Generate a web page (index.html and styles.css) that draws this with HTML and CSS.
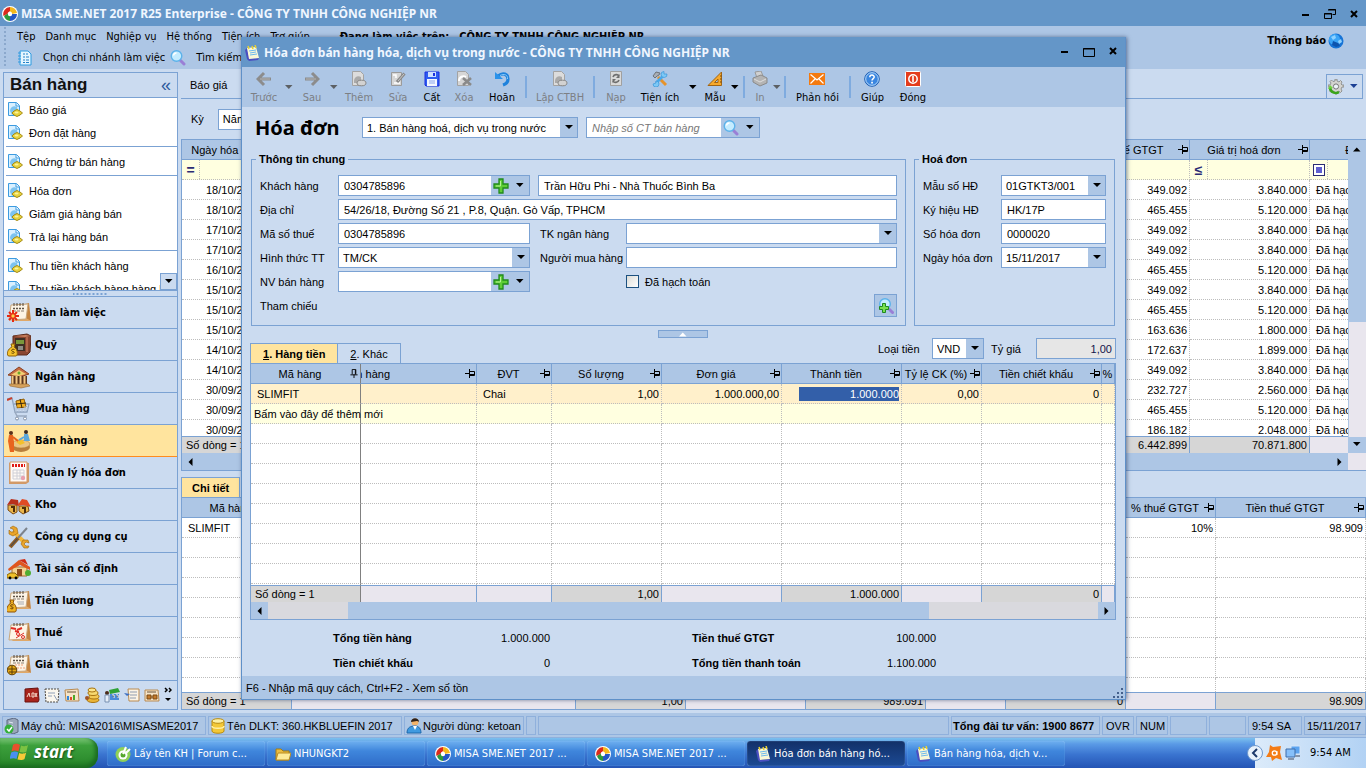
FILE: index.html
```html
<!DOCTYPE html>
<html lang="vi">
<head>
  <meta charset="UTF-8">
  <meta name="viewport" content="width=device-width, initial-scale=1.0">
  <title>MISA SME.NET 2017</title>
  <link rel="stylesheet" href="styles.css">
</head>
<body>

<!-- Icon sprite -->
<svg class="sprite" xmlns="http://www.w3.org/2000/svg">
  <symbol id="i-logo" viewBox="0 0 16 16">
    <circle cx="8" cy="8" r="8" fill="#fff"/>
    <path d="M8 1a7 7 0 0 1 7 6l-5 1-2-3z" fill="#f4b81c"/>
    <path d="M15 8a7 7 0 0 1-7 7l-1-5 3-2z" fill="#2457c5"/>
    <path d="M8 15a7 7 0 0 1-6-5l4-3 2 3z" fill="#2c9a3c"/>
    <path d="M1.500 10A7 7 0 0 1 8 1v4L5 8z" fill="#dc2a1c"/>
    <circle cx="8" cy="8" r="2.200" fill="#fff"/>
  </symbol>
  <symbol id="i-note" viewBox="0 0 16 16">
    <path d="M1 5l2-2 3 12-3-1z" fill="#4a4fc0"/>
    <path d="M3 14l12-1-1 2-9 1z" fill="#4a4fc0"/>
    <path d="M3 3l9-1 3 11-10 1z" fill="#fbf8d8"/>
    <path d="M5 6l7-1M6 8l6-1M6 10l7-1" stroke="#6cb8ee"/>
    <path d="M4 1l1 3M8 1l1 3M11 0l1 3" stroke="#e8cf32" stroke-width="1.500"/>
  </symbol>
  <symbol id="i-list" viewBox="0 0 16 16">
    <path d="M3 1h8l3 3v11H3z" fill="#e6f6ff" stroke="#2f9be0"/>
    <path d="M1 3h3M1 6h3M1 9h3M1 12h3" stroke="#2f9be0"/>
    <path d="M6 4h2M6 7h2M6 10h2M6 12.500h2M9 4h2M9 7h3M9 10h3M9 12.500h3" stroke="#2382c8" stroke-width="1.200"/>
  </symbol>
  <symbol id="i-search" viewBox="0 0 16 16">
    <path d="M10.500 10.500l3.500 3.500" stroke="#9a7fd6" stroke-width="3" stroke-linecap="round"/>
    <circle cx="6.500" cy="6" r="5.300" fill="#c4ecff" stroke="#5cb2ea" stroke-width="1.400"/>
    <path d="M3.500 5.500a3 3 0 0 1 3-2.500" stroke="#fff" stroke-width="1.500" fill="none"/>
  </symbol>
  <symbol id="i-search-add" viewBox="0 0 16 16">
    <path d="M11.500 11.500l3 3" stroke="#9a7fd6" stroke-width="3" stroke-linecap="round"/>
    <circle cx="7" cy="6" r="5.300" fill="#c4ecff" stroke="#5cb2ea" stroke-width="1.400"/>
    <path d="M4.500 5.500h3v3h3v3h-3v3h-3v-3h-3v-3h3z" fill="#7ae04e" stroke="#1f8a1f"/>
  </symbol>
  <symbol id="i-globe" viewBox="0 0 16 16">
    <circle cx="8" cy="8" r="7.500" fill="#1673d6"/>
    <circle cx="6.500" cy="6.500" r="5.500" fill="#3aa4f6"/>
    <path d="M3 4l4-2 1 3-3 2zM10 8l3-2 1 3-3 2z" fill="#8fd2ff"/>
    <path d="M5 8l5 2 2 3-4 1-4-2z" fill="#0d54ae"/>
  </symbol>
  <symbol id="i-gear" viewBox="0 0 16 16">
    <path d="M7 0h2v2l2 1 1.500-1.500L14 3l-1 2 1 1h2v2h-2l-1 2 1 2-1.500 1.500L11 12l-2 1v2H7v-2l-2-1-2 1.500L1.500 12 3 10 2 8H0V6h2l1-2-1-1.500L3.500 1 5 2.500 7 2z" fill="#d4d4d0" stroke="#82827e" stroke-width=".8"/>
    <circle cx="8" cy="7.500" r="2.600" fill="#eef3fa" stroke="#777"/>
    <path d="M2 9c1 5 6 6 9 4" stroke="#3aa51a" stroke-width="2.600" fill="none"/>
    <path d="M0 10l2-4 3 3z" fill="#6fd23c"/>
  </symbol>
  <symbol id="i-voucher" viewBox="0 0 16 16">
    <path d="M1.500.500h8l3 3v10h-11z" fill="#d9f0ff" stroke="#3c9be0"/>
    <path d="M9 1v3h3" fill="#fff" stroke="#3c9be0"/>
    <path d="M3 9c0-4 4-6 7-4l1 5-6 3z" fill="#7cc3f0"/>
    <path d="M5 11l2-2 3-1.500 3 1.500 2.500 2-2.500 2-3 1.500L7 13z" fill="#e6d23e" stroke="#a88c14"/>
    <ellipse cx="9.500" cy="10.500" rx="2" ry="1" fill="#fbf39a"/>
  </symbol>
  <symbol id="i-pin" viewBox="0 0 10 9">
    <path d="M0 4.500h4M4.500 0v9M4.500 2.500h5v4h-5M4.500 5.500H9" stroke="#000" fill="none"/>
  </symbol>
  <symbol id="i-pinned" viewBox="0 0 10 10">
    <path d="M5 6v4M1 6.500h8M3 6V.500h4V6M6.500 1v5" stroke="#000" fill="none"/>
  </symbol>
  <symbol id="i-down" viewBox="0 0 8 5"><path d="M0 0h7.500L3.800 4z"/></symbol>
  <symbol id="i-up" viewBox="0 0 8 5"><path d="M0 4.500h7.500L3.800.500z"/></symbol>
  <symbol id="i-left" viewBox="0 0 5 8"><path d="M4.500 0v8L.500 4z"/></symbol>
  <symbol id="i-right" viewBox="0 0 5 8"><path d="M.500 0v8l4-4z"/></symbol>
  <symbol id="i-plus" viewBox="0 0 16 16">
    <path d="M6 1h4v5h5v4h-5v5H6v-5H1V6h5z" fill="#5fce35" stroke="#218a1c" stroke-width="1.300"/>
    <path d="M7.500 3v5H3" stroke="#b6f29a" fill="none"/>
  </symbol>

  <!-- dialog toolbar -->
  <symbol id="i-back" viewBox="0 0 16 16"><path d="M8 2L2 8l6 6M3 8h12" stroke="#8c8c8c" stroke-width="3" fill="none"/><path d="M4 8h10" stroke="#b5b5b5"/></symbol>
  <symbol id="i-next" viewBox="0 0 16 16"><path d="M8 2l6 6-6 6M13 8H1" stroke="#8c8c8c" stroke-width="3" fill="none"/><path d="M2 8h10" stroke="#b5b5b5"/></symbol>
  <symbol id="i-add" viewBox="0 0 16 16">
    <path d="M1.500.500h8l3 3v11h-11z" fill="#dcdcdc" stroke="#a3a3a3"/>
    <path d="M3 10c0-4 4-6 7-4v6H3z" fill="#aaa"/>
    <ellipse cx="10.500" cy="12" rx="4.500" ry="2.800" fill="#d2d2d2" stroke="#888"/>
  </symbol>
  <symbol id="i-edit" viewBox="0 0 16 16">
    <path d="M1.500 1.500h10v13h-10z" fill="#d6d6d6" stroke="#9b9b9b"/>
    <path d="M3 4h3v3M4 12h6" stroke="#fff" stroke-width="1.500" fill="none"/>
    <path d="M14.500 2.500L7 11" stroke="#888" stroke-width="3"/><path d="M14 3L8 10" stroke="#c8c8c8"/>
  </symbol>
  <symbol id="i-save" viewBox="0 0 16 16">
    <path d="M1 1h14v14H2l-1-1z" fill="#2f5cf0" stroke="#1a2ee0"/>
    <path d="M4 1h8v5H4z" fill="#cfe0ff"/><path d="M9 2h2v3H9z" fill="#1a2ee0"/>
    <path d="M3 8h10v7H3z" fill="#f4f7ff"/><path d="M5 10h6M5 12h6" stroke="#8aa6ea"/>
  </symbol>
  <symbol id="i-delete" viewBox="0 0 16 16">
    <path d="M1.500.500h8l3 3v11h-11z" fill="#d6d6d6" stroke="#a3a3a3"/>
    <path d="M3 10c0-4 4-6 7-4" stroke="#fff" stroke-width="2" fill="none"/>
    <path d="M7 7l8 7M15 7l-8 7" stroke="#8a8a8a" stroke-width="2.600"/>
  </symbol>
  <symbol id="i-undo" viewBox="0 0 16 16">
    <path d="M4 5c5-4 10-2 10 3 0 3-2 5-5 6" stroke="#1f82dc" stroke-width="3.200" fill="none"/>
    <path d="M1 1v7h8z" fill="#2a92ea"/><path d="M6 4.500c4-2 8-1 7.500 3.500" stroke="#86c9fa" fill="none"/>
  </symbol>
  <symbol id="i-reload" viewBox="0 0 16 16">
    <path d="M2.500.500h11v14h-11z" fill="#d9d9d9" stroke="#a0a0a0"/>
    <path d="M5 6c1-3 5-3 6-1M11 9c-1 3-5 3-6 1" stroke="#6e6e6e" stroke-width="1.600" fill="none"/>
    <path d="M11.500 3v4H8zM4.500 12V8H8z" fill="#6e6e6e"/>
  </symbol>
  <symbol id="i-tools" viewBox="0 0 16 16">
    <path d="M6 6l8 8" stroke="#e6932a" stroke-width="3"/>
    <path d="M1 5l3-4 4 1-1 2-2 1-2 2z" fill="#a9aeb5" stroke="#6d7278"/>
    <path d="M12 4L4 12" stroke="#4aa9ea" stroke-width="2.600"/>
    <path d="M15 3a3 3 0 1 1-3-2.500V3h2zM1 13a3 3 0 1 0 3-3v2z" fill="#7cc8f6" stroke="#3c96d8" stroke-width=".7"/>
  </symbol>
  <symbol id="i-ruler" viewBox="0 0 16 16">
    <path d="M14.500 1v13.500H1z" fill="#f6a92c" stroke="#a06414"/>
    <path d="M11 8v3.500H7.500z" fill="#adc6e5" stroke="#a06414"/>
    <path d="M13 5h1.500M13 8h1.500M13 11h1.500" stroke="#6a4410"/>
  </symbol>
  <symbol id="i-print" viewBox="0 0 16 16">
    <path d="M3 1l6-1 2 5-6 2z" fill="#d0d0d0" stroke="#999"/>
    <path d="M1 7l8-3 6 3v5l-7 3-7-4z" fill="#b4b4b4" stroke="#8a8a8a"/>
    <path d="M2 8l6 3 6-3" stroke="#ddd" fill="none"/>
  </symbol>
  <symbol id="i-mail" viewBox="0 0 16 16">
    <path d="M0 2h16v12H0z" fill="#f47a10"/>
    <path d="M1.500 3.500L8 9l6.500-5.500M1.500 12.500L6 8M14.500 12.500L10 8" stroke="#fff" stroke-width="1.200" fill="none"/>
  </symbol>
  <symbol id="i-help" viewBox="0 0 16 16">
    <circle cx="8" cy="8" r="7.300" fill="#3a86e0" stroke="#2160b4"/>
    <circle cx="8" cy="8" r="6.300" fill="none" stroke="#b4d9fa"/>
    <path d="M5.800 6.300c0-3 4.400-2.800 4.400-.3 0 1.600-2.200 1.600-2.200 3.500" stroke="#fff" stroke-width="1.500" fill="none"/>
    <path d="M7.200 10.800h1.700v1.700H7.200z" fill="#fff"/>
  </symbol>
  <symbol id="i-power" viewBox="0 0 16 16">
    <rect x=".5" y=".5" width="15" height="15" rx="1" fill="#e43c1c" stroke="#fff"/>
    <circle cx="8" cy="8" r="4.200" fill="none" stroke="#fff" stroke-width="1.500"/>
    <path d="M8 5v6" stroke="#fff" stroke-width="1.600"/>
  </symbol>

  <!-- navigation -->
  <symbol id="i-cal" viewBox="0 0 24 24">
    <path d="M18 3l4-1 2 18-5-2z" fill="#c58440"/>
    <path d="M3 18l16-1 5 3H6z" fill="#e0a868"/>
    <path d="M4 4l17-1-2 15-17 1z" fill="#fdf4e6" stroke="#c9a77c"/>
    <path d="M6 7.500h12" stroke="#5e5246" stroke-width="1.500" stroke-dasharray="2 1"/>
    <path d="M6 10h11" stroke="#8d8072" stroke-dasharray="3 1"/>
    <path d="M7 2v3M10 2v3M13 2v3M16 2v3" stroke="#4e4236"/>
  </symbol>
  <symbol id="i-desk" viewBox="0 0 24 24">
    <use href="#i-cal"/>
    <path d="M6 9v12M0 15h12M2 11l8 8M10 11l-8 8" stroke="#e52a14" stroke-width="2"/>
    <circle cx="6" cy="15" r="2.200" fill="#ffd24a" stroke="#e52a14"/>
  </symbol>
  <symbol id="i-safe" viewBox="0 0 24 24">
    <path d="M6 3l14-2 4 2-1 16-3 3H6z" fill="#8a4630" stroke="#5e2c1c"/>
    <path d="M7 3l12-1 4 1-5 1z" fill="#c9805e"/>
    <path d="M8 5h10v13H8z" fill="#3e2f24"/>
    <path d="M9 7h8v4H9z" fill="#78973c"/><path d="M11 13h5v4h-5z" fill="#8d8d86"/>
    <path d="M20 4v15" stroke="#b0654a" stroke-width="2"/>
    <path d="M4 11h4l-1 3c4 2 4 9 2 9H2c-3 0-2-7 3-9z" fill="#f6c22c" stroke="#8e6308"/>
    <path d="M7.500 16.500c-3-1-4 1.500-1.500 2s1 2.500-1.500 1.500" stroke="#5f4000" fill="none"/>
  </symbol>
  <symbol id="i-bank" viewBox="0 0 24 24">
    <path d="M1 10L12 2l10 7-9 3z" fill="#c56a42" stroke="#8b4222"/>
    <path d="M4 10l8-5 7 4-7 2z" fill="#f2cf74"/><circle cx="12" cy="8" r="1.500" fill="#6ca82a"/>
    <path d="M4 11h16v8H4z" fill="#5a3620"/>
    <path d="M5.500 11v8M9.500 11v8M13.500 11v8M17.500 11v8" stroke="#f3c884" stroke-width="2"/>
    <path d="M2 19h19l2 2-9 2-11-2z" fill="#d5a15c" stroke="#94642e" stroke-width=".6"/>
  </symbol>
  <symbol id="i-cart" viewBox="0 0 24 24">
    <path d="M0 2l5-1 3 14h12l2-8H7" stroke="#8ea2bd" stroke-width="1.300" fill="none"/>
    <path d="M0 3l5-2" stroke="#c8402c" stroke-width="2"/>
    <path d="M9 4l8-2 2 8-9 1z" fill="#f3ae1e" stroke="#8f5d06"/>
    <path d="M13 2l2 9M9 7l10-1" stroke="#3c2a0c"/>
    <path d="M9 9v6M12 11v4M15 11v4M18 9v6M8 12h13" stroke="#b4c3d8"/>
    <path d="M8 15l2 4h10" stroke="#9aaac0" fill="none" stroke-width="1.500"/>
    <circle cx="10" cy="21.500" r="1.500" fill="#fff" stroke="#8191a8"/><circle cx="18" cy="21.500" r="1.500" fill="#fff" stroke="#8191a8"/>
  </symbol>
  <symbol id="i-sale" viewBox="0 0 24 24">
    <ellipse cx="14" cy="18" rx="9" ry="5" fill="#b97f3c"/>
    <ellipse cx="14" cy="15" rx="9" ry="4" fill="#ebc583" stroke="#b17c38" stroke-width=".6"/>
    <path d="M9 13l5-3 4 4-5 2z" fill="#f3c02c"/>
    <circle cx="4" cy="4" r="2" fill="#5b2f1a"/>
    <path d="M2 6l4 0 1 7 0 10H3L1 12z" fill="#e8641e"/><path d="M6 8l5 4" stroke="#e8641e" stroke-width="2"/>
    <circle cx="19" cy="3" r="2" fill="#3b2a22"/>
    <path d="M17 5h4l2 7h-6z" fill="#5ba7dc"/><path d="M17 8l-5 3" stroke="#5ba7dc" stroke-width="2"/>
  </symbol>
  <symbol id="i-invoice" viewBox="0 0 24 24">
    <path d="M2 2h20v19l-3 2H2z" fill="#d29a68"/>
    <path d="M3 1h17v20H3z" fill="#fffaf6" stroke="#d29a68"/>
    <path d="M5 4.500h13" stroke="#e01c14" stroke-width="3" stroke-dasharray="2 1"/>
    <path d="M6 9h11v9H6zM6 12h11M6 15h11M10 9v9M13 9v9" stroke="#cfcfd6" fill="none"/>
    <circle cx="16" cy="17" r="2.200" fill="#e9a0b0"/>
  </symbol>
  <symbol id="i-store" viewBox="0 0 24 24">
    <path d="M1 12h9v7l-4 2-5-4z" fill="#eab54a" stroke="#7c4a12"/><path d="M0 12l4-6 7 1 1 6-6-2z" fill="#b8301c"/>
    <path d="M12 13h9l1 5-6 3-4-3z" fill="#eab54a" stroke="#7c4a12"/><path d="M10 13l5-7 5 1 4 7-8-2z" fill="#e04a26"/>
    <path d="M4 14h3v5M15 15h3v5" stroke="#4e2c08" stroke-width="2" fill="none"/>
  </symbol>
  <symbol id="i-wrench" viewBox="0 0 24 24">
    <path d="M6 6l12 12" stroke="#f3b63a" stroke-width="4"/>
    <path d="M3 3l3 1 1 3-3 0-2-2 0 4 4 2 5-3-1-5-4-2zM22 21l-3 0-2-2 2-2 3 1-1-3-5 0-2 4 3 4 4 0z" fill="#e9a42a" stroke="#9c6510" stroke-width=".6"/>
    <path d="M20 3l-9 10" stroke="#7d838c" stroke-width="2"/><path d="M11 13l-8 9" stroke="#8a5b26" stroke-width="4"/><path d="M10 14l-6 7" stroke="#3c4a5c" stroke-width="1"/>
  </symbol>
  <symbol id="i-house" viewBox="0 0 24 24">
    <path d="M5 10h15v9H5z" fill="#f4d493" stroke="#a86c2c"/>
    <path d="M1 12L12 3l11 7v3l-10-5-11 6z" fill="#e0561e"/><path d="M12 3l6-1 3 6z" fill="#d02c14"/>
    <path d="M10 12h5v7h-5z" fill="#8f4c1c"/>
    <path d="M0 18l3-2h5l3 3v2H0z" fill="#f0c02a" stroke="#8c6408"/><circle cx="3" cy="21" r="1.400"/><circle cx="9" cy="21" r="1.400"/>
    <circle cx="21" cy="16" r="3" fill="#4fae32"/>
  </symbol>
  <symbol id="i-salary" viewBox="0 0 24 24">
    <use href="#i-cal"/>
    <path d="M10 13h7M11 15h6" stroke="#a5aab4"/>
    <path d="M3 11h4l-1 3c4 2 4 9 2 9H1c-3 0-1-7 3-9z" fill="#f0b424" stroke="#8e5208"/>
    <path d="M6.500 16c-3-1-4 1.500-1.500 2s1 2.500-1.500 1.500" stroke="#5f3000" fill="none"/>
  </symbol>
  <symbol id="i-tax" viewBox="0 0 24 24">
    <use href="#i-cal"/>
    <path d="M4 6h14v6H4z" fill="#fdf4e6"/><path d="M4 7l5 1M8 10l4 1M10 9l5-2" stroke="#e02c24" stroke-width="2"/>
    <path d="M9 17l8-5" stroke="#e02c24"/><circle cx="11" cy="13" r="1.500" fill="none" stroke="#e02c24"/><circle cx="16" cy="16" r="1.500" fill="none" stroke="#e02c24"/>
  </symbol>
  <symbol id="i-cost" viewBox="0 0 24 24">
    <use href="#i-cal"/>
    <path d="M8 12h9M10 15h8" stroke="#f0a07c" stroke-dasharray="2 1"/>
    <circle cx="5" cy="17" r="4.800" fill="#e6a814" stroke="#5c3c04"/><path d="M1 16h8M5 13v8M2 19h7" stroke="#5c3c04"/>
  </symbol>
  <symbol id="i-book" viewBox="0 0 16 16"><path d="M1 2l13-1 1 12-1 2H1z" fill="#a8241c" stroke="#6a120e"/><path d="M3 10l2-4 1 4M8 6h2v4H8zM11 6l2 4M13 6l-2 4" stroke="#f4d8c8" fill="none"/></symbol>
  <symbol id="i-check" viewBox="0 0 16 16"><path d="M1 2h14l-1 13H2z" fill="#fbf7ee" stroke="#4e4a44" stroke-dasharray="2 1"/><path d="M4 6h7M4 9h4M10 8l3 5" stroke="#90a0b8"/></symbol>
  <symbol id="i-report" viewBox="0 0 16 16"><path d="M1 3l13-1 1 12H2z" fill="#f5e4c8" stroke="#b98a50"/><path d="M3 5h9" stroke="#6c5438"/><path d="M4 13V9" stroke="#2e86dc" stroke-width="2"/><path d="M7 13v-3" stroke="#e04a28" stroke-width="2"/><path d="M10 13V8" stroke="#4ca828" stroke-width="2"/></symbol>
  <symbol id="i-coins" viewBox="0 0 16 16"><ellipse cx="9" cy="13" rx="6" ry="2.500" fill="#eab436" stroke="#a87410"/><ellipse cx="10" cy="9.500" rx="5" ry="2.500" fill="#f2c854" stroke="#a87410"/><ellipse cx="9" cy="6" rx="5" ry="2.500" fill="#f6d870" stroke="#a87410"/><ellipse cx="8" cy="3" rx="4" ry="2" fill="#fbe58c" stroke="#a87410"/><circle cx="3" cy="11" r="2" fill="#a25426"/></symbol>
  <symbol id="i-shop" viewBox="0 0 16 16"><path d="M5 3l9-2 2 4-10 2z" fill="#2fa236"/><path d="M6 7h9v6H6z" fill="#4a8bd8"/><path d="M8 8h2v3M12 8h2v3" stroke="#fff"/><circle cx="3" cy="6" r="2" fill="#4c2c18"/><path d="M1 8h4v7H1z" fill="#e6eef8" stroke="#7890b0"/></symbol>
  <symbol id="i-form" viewBox="0 0 16 16"><path d="M4 2h11v12H5z" fill="#fbf4e6" stroke="#b98a50"/><path d="M6 5h7M6 8h7M6 11h6" stroke="#8f9cb0"/><path d="M0 6l6 1-3 2z" fill="#3e6fc0"/></symbol>
  <symbol id="i-merge" viewBox="0 0 16 16"><path d="M1 3h13l1 11H1z" fill="#f5e4c8" stroke="#b98a50"/><path d="M3 5h9" stroke="#6c5438"/><path d="M3 8h4v4H3zM9 8h4v4H9zM7 10h2" fill="#c47a2c" stroke="#7c4a12"/></symbol>

  <!-- status bar and task bar -->
  <symbol id="i-server" viewBox="0 0 16 16"><path d="M3 2l7-2 4 2v12l-5 2-6-3z" fill="#9aa6ba" stroke="#5c6880"/><path d="M5 4l4 1M5 7l4 1" stroke="#e4ebf5"/><circle cx="5" cy="11" r="4.500" fill="#34b03a"/><path d="M3 11l2 2 3-4" stroke="#fff" stroke-width="1.500" fill="none"/></symbol>
  <symbol id="i-db" viewBox="0 0 16 16"><path d="M2 3v10c0 3 12 3 12 0V3z" fill="#f3c838" stroke="#b98c10"/><ellipse cx="8" cy="3" rx="6" ry="2.300" fill="#fdf0a4" stroke="#b98c10"/><path d="M2 8c0 3 12 3 12 0" stroke="#fff2a8" fill="none" stroke-width="1.500"/></symbol>
  <symbol id="i-user" viewBox="0 0 16 16"><circle cx="9" cy="4" r="3.500" fill="#f2b36a"/><path d="M5 4c0-5 8-5 8 0-2-2-5 0-8 0z" fill="#2e2018"/><path d="M1 15c0-6 4-7 8-7s6 3 6 7z" fill="#3f9ae0" stroke="#1f68ac"/><path d="M7 8l2 4 2-4z" fill="#fff"/></symbol>
  <symbol id="i-flag" viewBox="0 0 20 18">
    <path d="M3 2c3-2 5-1 7 0L8.500 8.500C6 7.500 4 7 1.500 8.500z" fill="#e8502c"/><path d="M11 2.500c2 1 5 1 7-.5l-1.500 6.500c-2 1.500-5 1-7 .5z" fill="#7cc242"/>
    <path d="M1.200 9.500c3-1.500 5-1 7 0L6.500 16c-2-1-4-1-7 0z" fill="#4a8ff0"/><path d="M9.200 10c2 1 5 1 7-.5L14.500 16c-2 1.500-5 1-7 .5z" fill="#f8ca38"/>
  </symbol>
  <symbol id="i-coccoc" viewBox="0 0 16 16"><circle cx="8" cy="8.500" r="7.500" fill="#8ed058"/><circle cx="8" cy="9" r="4.500" fill="#fff"/><circle cx="8" cy="9" r="2.500" fill="#56a82e"/><path d="M8 8l3-7M10 8l5-5" stroke="#fff" stroke-width="2"/></symbol>
  <symbol id="i-folder" viewBox="0 0 16 16"><path d="M1 3h5l2 2h6v9H1z" fill="#e9bc40" stroke="#a67c12"/><path d="M3 7h13l-2 7H1z" fill="#fdeb9a" stroke="#b98c22"/></symbol>
  <symbol id="i-chev" viewBox="0 0 16 16"><circle cx="8" cy="8" r="7.500" fill="#e8f2fc" stroke="#6f98cc"/><path d="M10 4L6 8l4 4" stroke="#1c3a6c" stroke-width="2" fill="none"/></symbol>
  <symbol id="i-avast" viewBox="0 0 16 16"><path d="M4 0l3 2 8-1-1 6 2 8-6-2-4 3-1-4-5 0 3-5z" fill="#f47c16"/><circle cx="8.500" cy="8" r="2.200" fill="none" stroke="#fff" stroke-width="1.300"/><path d="M11 6v4" stroke="#fff"/></symbol>
  <symbol id="i-net" viewBox="0 0 16 16"><path d="M6 1h9v8H6z" fill="#5ca4f0" stroke="#d6e6f8"/><path d="M1 4h9v8H1z" fill="#86c0fa" stroke="#3e6ca8"/><path d="M3 14h6M10 11h5" stroke="#8494aa" stroke-width="2"/></symbol>
</svg>

<header class="titlebar">
  <svg class="icon"><use href="#i-logo"/></svg>
  <h1>MISA SME.NET 2017 R25 Enterprise - CÔNG TY TNHH CÔNG NGHIỆP NR</h1>
  <div class="win-buttons">
    <button aria-label="Minimize"><svg viewBox="0 0 12 12"><path d="M2 7h7" stroke="#000" stroke-width="2"/></svg></button>
    <button aria-label="Restore"><svg viewBox="0 0 12 12"><path d="M4.500 1.500h7v5h-3M4 2h8M.500 5.500h7v5h-7zM0 6h8" stroke="#000" fill="none"/></svg></button>
    <button aria-label="Close"><svg viewBox="0 0 12 12"><path d="M3 3l6 6M9 3l-6 6" stroke="#000" stroke-width="2"/></svg></button>
  </div>
</header>

<div class="menus">
  <div>
    <nav class="menu">
      <a href="#">Tệp</a><a href="#">Danh mục</a><a href="#">Nghiệp vụ</a><a href="#">Hệ thống</a><a href="#">Tiện ích</a><a href="#">Trợ giúp</a>
      <b>Đang làm việc trên:</b><b>CÔNG TY TNHH CÔNG NGHIỆP NR</b>
    </nav>
    <div class="quickbar">
      <button><svg class="icon"><use href="#i-list"/></svg>Chọn chi nhánh làm việc</button>
      <button><svg class="icon"><use href="#i-search"/></svg>Tìm kiếm...</button>
    </div>
  </div>
  <button class="notice">Thông báo<svg class="icon"><use href="#i-globe"/></svg></button>
</div>

<div class="workspace">
  <aside class="sidebar">
    <div class="side-title"><h2>Bán hàng</h2><button aria-label="Thu gọn">«</button></div>
    <div class="side-list">
      <a href="#"><svg><use href="#i-voucher"/></svg>Báo giá</a>
      <a href="#"><svg><use href="#i-voucher"/></svg>Đơn đặt hàng</a>
      <hr>
      <a href="#"><svg><use href="#i-voucher"/></svg>Chứng từ bán hàng</a>
      <hr>
      <a href="#"><svg><use href="#i-voucher"/></svg>Hóa đơn</a>
      <a href="#"><svg><use href="#i-voucher"/></svg>Giảm giá hàng bán</a>
      <a href="#"><svg><use href="#i-voucher"/></svg>Trả lại hàng bán</a>
      <hr>
      <a href="#"><svg><use href="#i-voucher"/></svg>Thu tiền khách hàng</a>
      <a href="#"><svg><use href="#i-voucher"/></svg>Thu tiền khách hàng hàng loạt</a>
      <button class="list-more" aria-label="Cuộn xuống"><svg class="arrow"><use href="#i-down"/></svg></button>
    </div>
    <div class="splitter"></div>
    <nav class="side-nav">
      <a href="#"><svg><use href="#i-desk"/></svg>Bàn làm việc</a>
      <a href="#"><svg><use href="#i-safe"/></svg>Quỹ</a>
      <a href="#"><svg><use href="#i-bank"/></svg>Ngân hàng</a>
      <a href="#"><svg><use href="#i-cart"/></svg>Mua hàng</a>
      <a href="#" class="active"><svg><use href="#i-sale"/></svg>Bán hàng</a>
      <a href="#"><svg><use href="#i-invoice"/></svg>Quản lý hóa đơn</a>
      <a href="#"><svg><use href="#i-store"/></svg>Kho</a>
      <a href="#"><svg><use href="#i-wrench"/></svg>Công cụ dụng cụ</a>
      <a href="#"><svg><use href="#i-house"/></svg>Tài sản cố định</a>
      <a href="#"><svg><use href="#i-salary"/></svg>Tiền lương</a>
      <a href="#"><svg><use href="#i-tax"/></svg>Thuế</a>
      <a href="#"><svg><use href="#i-cost"/></svg>Giá thành</a>
    </nav>
    <div class="side-mini">
      <svg class="icon"><use href="#i-book"/></svg><svg class="icon"><use href="#i-check"/></svg><svg class="icon"><use href="#i-report"/></svg><svg class="icon"><use href="#i-coins"/></svg><svg class="icon"><use href="#i-shop"/></svg><svg class="icon"><use href="#i-form"/></svg><svg class="icon"><use href="#i-merge"/></svg>
      <svg class="more" viewBox="0 0 8 16"><path d="M1 1l2 2-2 2M5 1l2 2-2 2" stroke="#000" stroke-width="1.500" fill="none"/><path d="M1 11h6l-3 3z"/></svg>
    </div>
  </aside>

  <main class="content">
    <div class="view-bar">
      <a href="#">Báo giá</a>
      <button class="gear" aria-label="Tùy chọn"><svg class="icon"><use href="#i-gear"/></svg><svg class="arrow"><use href="#i-down"/></svg></button>
    </div>
    <div class="period">
      <label for="period">Kỳ</label>
      <select id="period"><option>Năm nay</option></select>
    </div>
    <section class="panel invoices">
      <div class="panel-main">
        <div class="grid" id="invoice-grid"></div>
        <div class="vscroll"><svg class="arrow"><use href="#i-up"/></svg><i></i><svg class="arrow"><use href="#i-down"/></svg></div>
      </div>
      <div class="hscroll"><svg class="arrow-v"><use href="#i-left"/></svg><i></i><svg class="arrow-v"><use href="#i-right"/></svg><span></span></div>
    </section>
    <div class="tabs detail-tabs"><button class="active">Chi tiết</button></div>
    <section class="panel details"><div class="grid" id="detail-grid"></div></section>
  </main>
</div>

<footer class="statusbar">
  <span class="w-server"><svg class="icon"><use href="#i-server"/></svg>Máy chủ: MISA2016\MISASME2017</span>
  <span class="w-db"><svg class="icon"><use href="#i-db"/></svg>Tên DLKT: 360.HKBLUEFIN 2017</span>
  <span class="w-user"><svg class="icon"><use href="#i-user"/></svg>Người dùng: ketoan</span>
  <span class="w-gap"></span>
  <span class="w-fill"></span>
  <span class="w-phone"><b>Tổng đài tư vấn: 1900 8677</b></span>
  <span class="w-key">OVR</span>
  <span class="w-key">NUM</span>
  <span class="w-blank"></span>
  <span class="w-blank"></span>
  <span class="w-time">9:54 SA</span>
  <span class="w-date">15/11/2017</span>
</footer>

<div class="taskbar">
  <button class="start"><svg><use href="#i-flag"/></svg>start</button>
  <div class="tasks">
    <button><svg class="icon"><use href="#i-coccoc"/></svg>Lấy tên KH | Forum c...</button>
    <button><svg class="icon"><use href="#i-folder"/></svg>NHUNGKT2</button>
    <button><svg class="icon"><use href="#i-logo"/></svg>MISA SME.NET 2017 ...</button>
    <button><svg class="icon"><use href="#i-logo"/></svg>MISA SME.NET 2017 ...</button>
    <button class="active"><svg class="icon"><use href="#i-note"/></svg>Hóa đơn bán hàng hó...</button>
    <button><svg class="icon"><use href="#i-note"/></svg>Bán hàng hóa, dịch v...</button>
  </div>
  <div class="tray">
    <svg class="icon"><use href="#i-chev"/></svg><svg class="icon"><use href="#i-avast"/></svg><svg class="icon"><use href="#i-net"/></svg>
    <time>9:54 AM</time>
  </div>
</div>

<!-- Invoice window -->
<div class="dialog" role="dialog" aria-labelledby="dialog-title">
  <div class="titlebar">
    <svg class="icon"><use href="#i-note"/></svg>
    <h1 id="dialog-title">Hóa đơn bán hàng hóa, dịch vụ trong nước - CÔNG TY TNHH CÔNG NGHIỆP NR</h1>
    <div class="win-buttons">
      <button aria-label="Minimize"><svg viewBox="0 0 12 12"><path d="M2 5h7" stroke="#000" stroke-width="2"/></svg></button>
      <button aria-label="Maximize"><svg viewBox="0 0 12 12"><path d="M.500 1.500h11v8H.500zM0 2h12" stroke="#000" fill="none"/></svg></button>
      <button aria-label="Close"><svg viewBox="0 0 12 12"><path d="M3 1l6 6M9 1l-6 6" stroke="#000" stroke-width="2"/></svg></button>
    </div>
  </div>

  <div class="toolbar">
    <button disabled><svg class="icon"><use href="#i-back"/></svg>Trước</button>
    <svg class="arrow off"><use href="#i-down"/></svg>
    <button disabled><svg class="icon"><use href="#i-next"/></svg>Sau</button>
    <svg class="arrow off"><use href="#i-down"/></svg>
    <button disabled><svg class="icon"><use href="#i-add"/></svg>Thêm</button>
    <button disabled><svg class="icon"><use href="#i-edit"/></svg>Sửa</button>
    <button><svg class="icon"><use href="#i-save"/></svg>Cất</button>
    <button disabled><svg class="icon"><use href="#i-delete"/></svg>Xóa</button>
    <button><svg class="icon"><use href="#i-undo"/></svg>Hoãn</button>
    <i></i>
    <button disabled><svg class="icon"><use href="#i-add"/></svg>Lập CTBH</button>
    <i></i>
    <button disabled><svg class="icon"><use href="#i-reload"/></svg>Nạp</button>
    <button><svg class="icon"><use href="#i-tools"/></svg>Tiện ích</button>
    <svg class="arrow"><use href="#i-down"/></svg>
    <button><svg class="icon"><use href="#i-ruler"/></svg>Mẫu</button>
    <svg class="arrow"><use href="#i-down"/></svg>
    <i></i>
    <button disabled><svg class="icon"><use href="#i-print"/></svg>In</button>
    <svg class="arrow off"><use href="#i-down"/></svg>
    <i></i>
    <button><svg class="icon"><use href="#i-mail"/></svg>Phản hồi</button>
    <i></i>
    <button><svg class="icon"><use href="#i-help"/></svg>Giúp</button>
    <button><svg class="icon"><use href="#i-power"/></svg>Đóng</button>
  </div>

  <div class="dialog-body">
    <div class="doc-head">
      <h2>Hóa đơn</h2>
      <select aria-label="Loại hóa đơn"><option>1. Bán hàng hoá, dịch vụ trong nước</option></select>
      <div class="combo">
        <input type="text" placeholder="Nhập số CT bán hàng" aria-label="Số CT bán hàng">
        <button aria-label="Tìm"><svg class="icon"><use href="#i-search"/></svg></button>
        <button aria-label="Mở"><svg class="arrow"><use href="#i-down"/></svg></button>
      </div>
    </div>

    <div class="forms">
      <fieldset class="general">
        <legend>Thông tin chung</legend>
        <div class="fields">
          <label for="customer">Khách hàng</label>
          <div class="combo">
            <input id="customer" type="text" value="0304785896">
            <button aria-label="Thêm khách hàng"><svg class="icon"><use href="#i-plus"/></svg></button>
            <button aria-label="Mở"><svg class="arrow"><use href="#i-down"/></svg></button>
          </div>
          <input class="to-end" type="text" aria-label="Tên khách hàng" value="Trần Hữu Phi - Nhà Thuốc Bình Ba">

          <label for="address">Địa chỉ</label>
          <input id="address" class="full" type="text" value="54/26/18, Đường Số 21 , P.8, Quận. Gò Vấp, TPHCM">

          <label for="taxcode">Mã số thuế</label>
          <input id="taxcode" type="text" value="0304785896">
          <label class="second" for="account">TK ngân hàng</label>
          <select id="account"><option></option></select>

          <label for="payment">Hình thức TT</label>
          <select id="payment"><option>TM/CK</option></select>
          <label class="second" for="buyer">Người mua hàng</label>
          <input id="buyer" type="text">

          <label for="seller">NV bán hàng</label>
          <div class="combo">
            <input id="seller" type="text">
            <button aria-label="Thêm nhân viên"><svg class="icon"><use href="#i-plus"/></svg></button>
            <button aria-label="Mở"><svg class="arrow"><use href="#i-down"/></svg></button>
          </div>
          <label class="check"><input type="checkbox">Đã hạch toán</label>

          <span class="ref">Tham chiếu</span>
          <button class="ref-button" aria-label="Chọn tham chiếu"><svg class="icon"><use href="#i-search-add"/></svg></button>
        </div>
      </fieldset>

      <fieldset class="invoice">
        <legend>Hoá đơn</legend>
        <div class="fields">
          <label for="form-no">Mẫu số HĐ</label>
          <select id="form-no"><option>01GTKT3/001</option></select>
          <label for="sign">Ký hiệu HĐ</label>
          <input id="sign" type="text" value="HK/17P">
          <label for="number">Số hóa đơn</label>
          <input id="number" type="text" value="0000020">
          <label for="date">Ngày hóa đơn</label>
          <select id="date"><option>15/11/2017</option></select>
        </div>
      </fieldset>
    </div>

    <button class="collapse" aria-label="Thu gọn"><svg class="arrow"><use href="#i-up"/></svg></button>

    <div class="tab-row">
      <div class="tabs">
        <button class="active"><u>1</u>. Hàng tiền</button>
        <button><u>2</u>. Khác</button>
      </div>
      <div class="currency">
        <label for="currency">Loại tiền</label>
        <select id="currency"><option>VND</option></select>
        <label for="rate">Tỷ giá</label>
        <input id="rate" type="text" value="1,00" readonly>
      </div>
    </div>

    <section class="panel items">
      <div class="grid" id="item-grid"></div>
      <div class="hscroll"><svg class="arrow-v"><use href="#i-left"/></svg><i></i><svg class="arrow-v"><use href="#i-right"/></svg></div>
    </section>

    <dl class="totals">
      <dt>Tổng tiền hàng</dt><dd>1.000.000</dd>
      <dt>Tiền thuế GTGT</dt><dd>100.000</dd>
      <dt>Tiền chiết khấu</dt><dd>0</dd>
      <dt>Tổng tiền thanh toán</dt><dd>1.100.000</dd>
    </dl>
  </div>

  <div class="hint">F6 - Nhập mã quy cách, Ctrl+F2 - Xem số tồn
    <svg viewBox="0 0 12 12"><path d="M8 1h2v2H8zM4 5h2v2H4zM8 5h2v2H8zM0 9h2v2H0zM4 9h2v2H4zM8 9h2v2H8z" fill="#44608c"/></svg>
  </div>
</div>

<script>
  const invoices = [
    ['18/10/2017', '349.092', '3.840.000'],
    ['18/10/2017', '465.455', '5.120.000'],
    ['17/10/2017', '349.092', '3.840.000'],
    ['17/10/2017', '349.092', '3.840.000'],
    ['16/10/2017', '465.455', '5.120.000'],
    ['15/10/2017', '349.092', '3.840.000'],
    ['15/10/2017', '465.455', '5.120.000'],
    ['15/10/2017', '163.636', '1.800.000'],
    ['14/10/2017', '172.637', '1.899.000'],
    ['14/10/2017', '349.092', '3.840.000'],
    ['30/09/2017', '232.727', '2.560.000'],
    ['30/09/2017', '465.455', '5.120.000'],
    ['30/09/2017', '186.182', '2.048.000']
  ];

  function cells(tag, row, cols) {
    return row.map((text, i) => `<${tag} class="${cols[i].align || ''}">${text}</${tag}>`).join('');
  }

  // Each grid is a header + body table and a separate footer table with the same columns
  function renderGrid(id, cols, rows, emptyRows, sums) {
    const colgroup = '<colgroup>' + cols.map(c => c.width ? `<col style="width:${c.width}px">` : '<col>').join('') + '</colgroup>';
    const head = cols.map(c => {
      const pin = c.title && !c.noPin ? `<svg class="pin"><use href="#${c.pinned ? 'i-pinned' : 'i-pin'}"/></svg>` : '';
      return `<th><div><span class="${c.clip ? 'clip' : ''}"><span>${c.title}</span></span>${pin}</div></th>`;
    }).join('');
    let body = rows.map(r => `<tr class="${r.cls || ''}">${r.html || cells('td', r.data, cols)}</tr>`).join('');
    body += `<tr>${'<td></td>'.repeat(cols.length)}</tr>`.repeat(emptyRows);
    const foot = sums.map((s, i) => `<td class="${s ? 'sum' : ''} ${i ? 'num' : ''}">${s}</td>`).join('');

    document.getElementById(id).innerHTML =
      `<div class="grid-body"><table>${colgroup}<thead><tr>${head}</tr></thead><tbody>${body}</tbody></table></div>` +
      `<div class="grid-foot"><table>${colgroup}<tbody><tr>${foot}</tr></tbody></table></div>`;
  }

  renderGrid('invoice-grid', [
    { title: 'Ngày hóa đơn', width: 100, align: 'mid' },
    { title: '' },
    { title: 'Tiền thuế GTGT', width: 120, align: 'num' },
    { title: 'Giá trị hoá đơn', width: 120, align: 'num' },
    { title: 'Đã hạch toán', width: 148 }
  ], [
    { cls: 'filter', html: '<td><b>=</b></td><td></td><td></td><td><b>≤</b></td><td><b><i></i></b></td>' },
    ...invoices.map(r => ({ data: [r[0], '', r[1], r[2], 'Đã hạch toán'] }))
  ], 0, ['Số dòng = 15', '', '6.442.899', '70.871.800', '']);

  renderGrid('detail-grid', [
    { title: 'Mã hàng', width: 110 },
    { title: '' },
    { title: 'Số lượng', width: 110, align: 'num' },
    { title: 'Đơn giá', width: 120, align: 'num' },
    { title: 'Thành tiền', width: 120, align: 'num' },
    { title: 'Tỷ lệ CK', width: 80, align: 'num' },
    { title: 'Tiền chiết khấu', width: 120, align: 'num' },
    { title: '% thuế GTGT', width: 90, align: 'num' },
    { title: 'Tiền thuế GTGT', width: 150, align: 'num' }
  ], [
    { data: ['SLIMFIT', '', '1,00', '989.091', '989.091', '', '0', '10%', '98.909'] }
  ], 9, ['Số dòng = 1', '', '1,00', '', '989.091', '', '0', '', '98.909']);

  renderGrid('item-grid', [
    { title: 'Mã hàng', width: 110, pinned: true },
    { title: 'Tên hàng', width: 116, clip: true },
    { title: 'ĐVT', width: 75 },
    { title: 'Số lượng', width: 110, align: 'num' },
    { title: 'Đơn giá', width: 120, align: 'num' },
    { title: 'Thành tiền', width: 120, align: 'num' },
    { title: 'Tỷ lệ CK (%)', width: 80, align: 'num' },
    { title: 'Tiền chiết khấu', width: 120, align: 'num' },
    { title: '%', noPin: true }
  ], [
    { cls: 'selected', data: ['SLIMFIT', '', 'Chai', '1,00', '1.000.000,00', '<mark>1.000.000</mark>', '0,00', '0', ''] },
    { cls: 'new', html: '<td class="spill">Bấm vào đây để thêm mới</td>' + '<td></td>'.repeat(8) }
  ], 9, ['Số dòng = 1', '', '', '1,00', '', '1.000.000', '', '0', '']);
</script>

</body>
</html>
```
FILE: styles.css
```css
* {
  box-sizing: border-box;
}

body {
  margin: 0;
  height: 100vh;
  overflow: hidden;
  display: flex;
  flex-direction: column;
  background: #adc6e5;
  color: #000;
  font: 11px/14px "Liberation Sans", Arial, sans-serif;
}

h1, h2, dl, dd {
  margin: 0;
}

a {
  color: inherit;
  text-decoration: none;
}

button, input, select {
  font: inherit;
  color: inherit;
  margin: 0;
}

button {
  padding: 0;
  border: 0;
  background: none;
}

svg {
  display: block;
  flex: none;
}

.sprite {
  position: absolute;
  width: 0;
  height: 0;
}

.icon {
  width: 16px;
  height: 16px;
}

.arrow {
  width: 8px;
  height: 5px;
}

.arrow-v {
  width: 5px;
  height: 8px;
}

.titlebar {
  height: 26px;
  flex: none;
  display: flex;
  align-items: center;
  gap: 3px;
  padding: 2px 6px 0 2px;
  background: #6496c8;
}

.titlebar h1 {
  flex: 1;
  font: bold 12px/18px "Noto Sans", "Open Sans", sans-serif;
  color: #f0f6ff;
  white-space: nowrap;
}

.win-buttons {
  display: flex;
  gap: 12px;
}

.win-buttons svg {
  width: 12px;
  height: 12px;
}

/* Menus */
.menus {
  height: 43px;
  flex: none;
  display: flex;
  justify-content: space-between;
  font-family: "DejaVu Sans Condensed", Tahoma, sans-serif;
}

.menu, .quickbar {
  display: flex;
  align-items: center;
  height: 21px;
  padding-left: 15px;
  margin-left: 2px;
  background: radial-gradient(circle, #8ba8cc 1px, transparent 1px) 1px 0 / 4px 4px repeat-y;
  white-space: nowrap;
}

.menu {
  gap: 10px;
}

.menu b {
  margin-left: 20px;
}

.menu b + b {
  margin-left: 0;
}

.quickbar button {
  display: flex;
  align-items: center;
  gap: 10px;
  margin-right: 5px;
}

.notice {
  display: flex;
  align-items: center;
  gap: 2px;
  height: 30px;
  margin-right: 22px;
  font-weight: bold;
}

/* Workspace */
.workspace {
  flex: 1;
  min-height: 0;
  display: flex;
  gap: 3px;
  padding: 3px 0 3px 3px;
  background: #cbdbf0;
}

.sidebar {
  width: 175px;
  flex: none;
  display: flex;
  flex-direction: column;
  border: 1px solid #7ba2d3;
}

.side-title {
  display: flex;
  align-items: center;
  justify-content: space-between;
  height: 25px;
  padding: 0 6px;
  border-bottom: 1px solid #7ba2d3;
}

.side-title h2 {
  font: bold 17px/24px "Liberation Sans", Arial, sans-serif;
  color: #111;
}

.side-title button {
  font-size: 18px;
  color: #2e5a9c;
}

.side-list {
  position: relative;
  flex: 1;
  min-height: 0;
  overflow: hidden;
  background: #fff;
}

.side-list a {
  display: flex;
  align-items: center;
  gap: 6px;
  height: 23px;
  padding-left: 3px;
  white-space: nowrap;
}

.side-list svg {
  width: 16px;
  height: 16px;
}

.side-list hr {
  margin: 2px 0 3px 2px;
  border: 0;
  border-top: 1px solid #7ba2d3;
}

.list-more {
  position: absolute;
  right: 0;
  bottom: 0;
  display: flex;
  align-items: center;
  justify-content: center;
  width: 17px;
  height: 17px;
  border: 1px solid #7ba2d3;
  background: #cbdbf0;
}

.side-list .list-more svg {
  width: 8px;
  height: 5px;
}

.splitter {
  height: 7px;
  flex: none;
  border: solid #7ba2d3;
  border-width: 1px 0;
  background: linear-gradient(90deg, #7ba2d3 50%, transparent 0) center / 4px 2px repeat-x content-box;
  padding: 2px 69px 1px;
}

.side-nav a {
  display: flex;
  align-items: center;
  gap: 4px;
  height: 32px;
  padding-left: 3px;
  border-bottom: 1px solid #7ba2d3;
  font-family: "DejaVu Sans Condensed", Tahoma, sans-serif;
  font-weight: bold;
}

.side-nav svg {
  width: 24px;
  height: 24px;
}

.side-nav a.active {
  background: #ffe49e;
  border-color: #ff8c1e;
}

.side-mini {
  display: flex;
  align-items: center;
  justify-content: flex-end;
  gap: 4px;
  height: 28px;
  padding-right: 5px;
}

.more {
  width: 8px;
  height: 16px;
}

.content {
  flex: 1;
  min-width: 0;
  display: flex;
  flex-direction: column;
}

.view-bar {
  display: flex;
  align-items: center;
  justify-content: space-between;
  height: 27px;
  margin-right: 3px;
  padding-left: 9px;
  border-bottom: 1px solid #7ba2d3;
}

.gear {
  display: flex;
  align-items: center;
  align-self: flex-end;
  gap: 6px;
  height: 24px;
  width: 37px;
  padding-left: 1px;
  border: 1px solid #7ba2d3;
  border-bottom: 0;
  fill: #1c3f94;
}

.period {
  display: flex;
  align-items: center;
  gap: 14px;
  height: 40px;
  padding-left: 10px;
}

.period select {
  width: 120px;
}

/* Controls */
select, input[type="text"], .combo {
  width: 100%;
  height: 21px;
  padding: 0 5px;
  border: 1px solid #7ba2d3;
  border-radius: 0;
  outline: 0;
  background: #fff;
}

select {
  appearance: none;
  padding: 0 18px 0 4px;
  background:
    url("data:image/svg+xml,%3Csvg xmlns='http://www.w3.org/2000/svg' width='8' height='5'%3E%3Cpath d='M0 0h8L4 4z'/%3E%3C/svg%3E") right 4px center no-repeat,
    linear-gradient(#adc6e5, #adc6e5) right / 17px 100% no-repeat,
    #fff;
}

.combo {
  display: flex;
  padding: 0;
  background: #adc6e5;
}

.combo input[type="text"] {
  flex: 1;
  min-width: 0;
  height: 19px;
  border: 0;
}

.combo button {
  display: flex;
  align-items: center;
  justify-content: center;
  width: 19px;
}

.combo input::placeholder {
  color: #777;
  font-style: italic;
}

/* Grids */
.panel {
  display: flex;
  flex-direction: column;
  min-height: 0;
  border: solid #7ba2d3;
  border-width: 1px 0 0 1px;
}

.invoices {
  height: 332px;
  flex: none;
  border-bottom-width: 1px;
}

.details {
  flex: 1;
}

.panel-main {
  flex: 1;
  min-height: 0;
  display: flex;
}

.grid {
  flex: 1;
  min-width: 0;
  min-height: 0;
  display: flex;
  flex-direction: column;
}

.grid-body {
  flex: 1;
  min-height: 0;
  overflow: hidden;
  background: #fff;
}

.grid-foot {
  overflow: hidden;
  flex: none;
}

.grid table {
  width: 100%;
  table-layout: fixed;
  border-collapse: separate;
  border-spacing: 0;
}

#invoice-grid table {
  width: calc(100% + 110px);
}

.grid th {
  height: 20px;
  padding: 0;
  border: solid #7ba2d3;
  border-width: 0 1px 1px 0;
  background: #adc6e5;
  font-weight: normal;
}

.grid th div {
  display: flex;
  align-items: center;
  overflow: hidden;
  padding-right: 1px;
}

.grid th div > span {
  flex: 1;
  min-width: 0;
  text-align: center;
  white-space: nowrap;
}

.grid th .clip {
  flex: none;
  display: flex;
  justify-content: flex-end;
  width: 29px;
  margin-right: auto;
  overflow: hidden;
}

.pin {
  width: 10px;
  height: 9px;
}

.grid td {
  height: 20px;
  padding: 0 2px 0 6px;
  border: dotted #bdbdbd;
  border-width: 0 1px 1px 0;
  white-space: nowrap;
  overflow: hidden;
}

.grid .num {
  text-align: right;
}

.grid .mid {
  text-align: center;
}

.grid-foot td {
  height: 17px;
  padding: 0 2px 0 4px;
  border: solid #7ba2d3;
  border-width: 1px 1px 0 0;
  background: #e9e6ee;
}

.grid-foot .sum {
  background: #d6d6d6;
}

.details .grid-foot {
  border-bottom: 1px solid #7ba2d3;
}

.filter td {
  padding: 0;
  background: #ffffe0;
}

.filter b {
  display: flex;
  align-items: center;
  justify-content: center;
  width: 18px;
  height: 19px;
  border-right: 1px dotted #bdbdbd;
  color: #2c2c74;
  font-size: 14px;
}

.filter i {
  width: 12px;
  height: 12px;
  border: 1px solid #2c2c74;
  background: #6060d0;
  box-shadow: inset 0 0 0 2px #fff;
}

.vscroll {
  width: 18px;
  flex: none;
  display: flex;
  flex-direction: column;
  align-items: center;
  justify-content: space-between;
  padding: 7px 0 6px;
  background: #adc6e5;
}

.vscroll i {
  width: 17px;
  height: 115px;
  margin: 165px 0 0;
  background: #e9e6ee;
}

.hscroll {
  height: 17px;
  flex: none;
  display: flex;
  align-items: center;
  background: #adc6e5;
}

.hscroll .arrow-v {
  margin: 0 6px;
}

.hscroll i {
  flex: 1;
}

.invoices .hscroll span {
  align-self: stretch;
  width: 18px;
  background: #e9e6ee;
}

.tabs {
  display: flex;
}

.tabs button {
  height: 20px;
  padding: 0 12px;
  border: 1px solid #7ba2d3;
  border-width: 1px 1px 0 0;
}

.tabs button:first-child {
  border-left-width: 1px;
}

.tabs .active {
  background: #ffe49e;
  font-weight: bold;
}

.detail-tabs {
  margin-top: 6px;
}

.detail-tabs button {
  padding: 0 10px;
}

/* Status bar */
.statusbar {
  height: 25px;
  flex: none;
  display: flex;
  gap: 2px;
  padding: 3px 0 2px 2px;
  border-bottom: 1px solid #8fb0dc;
  white-space: nowrap;
}

.statusbar span {
  display: flex;
  align-items: center;
  gap: 1px;
  flex: none;
  padding: 0 1px;
  overflow: hidden;
  border: 1px solid #8fb0dc;
}

.statusbar .w-server { width: 204px; }
.statusbar .w-db { width: 194px; }
.statusbar .w-user { width: 120px; }
.statusbar .w-gap { width: 10px; }
.statusbar .w-fill { flex: 1; }
.statusbar .w-phone { width: 149px; }
.statusbar .w-key { width: 32px; padding-left: 3px; }
.statusbar .w-blank { width: 37px; }
.statusbar .w-time { width: 54px; padding-left: 3px; }
.statusbar .w-date { width: 62px; padding-left: 2px; }

/* Taskbar */
.taskbar {
  height: 30px;
  flex: none;
  display: flex;
  background: linear-gradient(#7cc0ee, #5a9ae6 20%, #3a74d0 55%, #2454b4);
  color: #fff;
  font-family: "DejaVu Sans Condensed", Tahoma, sans-serif;
}

.start {
  display: flex;
  align-items: center;
  gap: 4px;
  width: 98px;
  padding: 0 0 2px 10px;
  border-radius: 0 12px 12px 0;
  background: linear-gradient(#7cc678, #3ca03c 25%, #2f8f30 70%, #1f7a22);
  box-shadow: inset -3px -2px 4px #1a6a20;
  font: italic bold 17px/24px "Open Sans", sans-serif;
  text-shadow: 1px 1px 2px #14501a;
}

.start svg {
  width: 20px;
  height: 18px;
}

.tasks {
  flex: 1;
  display: flex;
  gap: 2px;
  padding: 3px 0 2px 9px;
}

.tasks button {
  display: flex;
  align-items: center;
  gap: 3px;
  width: 158px;
  padding-left: 8px;
  border-radius: 3px;
  background: linear-gradient(#6fb0f0, #3f86dc 40%, #2f6cc8);
  box-shadow: inset 0 0 1px #a8d2fa;
  white-space: nowrap;
}

.tasks .active {
  background: linear-gradient(#123068, #1c4a94);
}

.tray {
  display: flex;
  align-items: center;
  gap: 3px;
  width: 119px;
  background: linear-gradient(90deg, transparent 8px, #dcebfa 8px, #b2d2f4);
  color: #000;
}

.tray time {
  margin-left: 6px;
}

/* Dialog */
.dialog {
  position: absolute;
  top: 37px;
  bottom: 68px;
  left: 241px;
  right: 240px;
  display: flex;
  flex-direction: column;
  border: 1px solid #5f90c8;
  border-top: 0;
  background: #cbdbf0;
  box-shadow: 1px 0 4px rgba(30, 50, 90, 0.6);
}

.dialog .titlebar {
  height: 30px;
  gap: 4px;
}

.toolbar {
  height: 40px;
  flex: none;
  display: grid;
  grid-template-columns: 38px 12px 34px 10px 40px 38px 30px 34px 42px 6px 62px 6px 38px 50px 15px 30px 10px 8px 24px 10px 5px 61px 4px 41px 40px;
  align-items: center;
  justify-items: center;
  padding-left: 3px;
  background: #adc6e5;
  font-family: "DejaVu Sans Condensed", Tahoma, sans-serif;
}

.toolbar button {
  display: flex;
  flex-direction: column;
  align-items: center;
  gap: 4px;
  padding-top: 2px;
  white-space: nowrap;
}

.toolbar button:disabled {
  color: #7c7f84;
}

.toolbar i {
  width: 2px;
  height: 22px;
  background: #7fabdf;
}

.off {
  fill: #5c6064;
}

.dialog-body {
  flex: 1;
  min-height: 0;
  display: flex;
  flex-direction: column;
  padding: 10px 10px 0 9px;
}

.doc-head {
  display: grid;
  grid-template-columns: 99px 216px 174px;
  column-gap: 8px;
  align-items: center;
  padding-left: 4px;
  margin-bottom: 14px;
}

.doc-head h2 {
  font: bold 20px/21px "Noto Sans", "Open Sans", sans-serif;
  white-space: nowrap;
}

.forms {
  display: flex;
  gap: 8px;
}

fieldset {
  min-width: 0;
  margin: 0;
  padding: 9px 8px;
  border: 1px solid #7ba2d3;
}

.general {
  flex: 1;
}

.invoice {
  width: 201px;
}

legend {
  padding: 0 3px;
  margin-left: -4px;
  font-weight: bold;
  line-height: 14px;
}

.fields {
  display: grid;
  grid-auto-rows: 21px;
  row-gap: 3px;
  align-items: center;
  white-space: nowrap;
}

.general .fields {
  grid-template-columns: 78px 192px 8px 88px 1fr;
}

.invoice .fields {
  grid-template-columns: 78px 1fr;
}

.general .second {
  grid-column: 3 / 5;
  padding-left: 10px;
}

.full {
  grid-column: 2 / -1;
}

.to-end {
  grid-column: 4 / -1;
}

.check {
  grid-column: 5;
  display: flex;
  align-items: center;
  gap: 6px;
}

.check input {
  appearance: none;
  width: 13px;
  height: 13px;
  border: 1px solid #1c5180;
  background: linear-gradient(135deg, #dcdcd7, #fff);
}

.ref {
  grid-column: 1;
}

.ref-button {
  grid-column: 5;
  justify-self: end;
  display: flex;
  align-items: center;
  justify-content: center;
  width: 23px;
  height: 23px;
  border: 1px solid #7ba2d3;
  background: #adc6e5;
}

.collapse {
  display: flex;
  align-items: center;
  justify-content: center;
  align-self: center;
  width: 50px;
  height: 8px;
  flex: none;
  margin-top: 4px;
  border: 1px solid #7ba2d3;
  background: #adc6e5;
  fill: #fff;
}

.tab-row {
  display: flex;
  justify-content: space-between;
  height: 25px;
  flex: none;
  margin: 0 -1px;
}

.tab-row .tabs {
  align-items: flex-end;
}

.currency {
  display: grid;
  grid-template-columns: 54px 52px 52px 80px;
  align-items: center;
  height: 21px;
}

.currency label + select + label {
  padding-left: 7px;
}

.currency #rate {
  background: #e6e6e6;
  color: #14144a;
  text-align: right;
  padding-right: 3px;
}

.items {
  flex: 1;
  margin: 0 -1px;
  border-width: 1px;
}

#item-grid tr > :first-child {
  border-right: 1px solid #808080;
}

.selected td {
  background: #fff0cb;
}

.new td {
  background: #ffffe0;
}

.grid .spill {
  padding-left: 3px;
  overflow: visible;
}

mark {
  display: block;
  margin-left: 11px;
  background: #335fa9;
  color: #fff;
}

.items .hscroll i {
  align-self: stretch;
  background: linear-gradient(#adc6e5, #adc6e5) 80px 0 / 581px 100% no-repeat #d9d9de;
}

.totals {
  display: grid;
  grid-template-columns: 120px 97px 285px 101px;
  grid-auto-rows: 25px;
  align-items: center;
  flex: none;
  height: 56px;
  padding: 5px 0 0 82px;
}

.totals dt {
  font-weight: bold;
}

.totals dd {
  text-align: right;
}

.totals dt:nth-of-type(even) {
  padding-left: 142px;
}

.hint {
  height: 23px;
  flex: none;
  display: flex;
  align-items: center;
  justify-content: space-between;
  padding-left: 4px;
  background: #adc6e5;
}

.hint svg {
  align-self: flex-end;
  width: 12px;
  height: 12px;
}
```
